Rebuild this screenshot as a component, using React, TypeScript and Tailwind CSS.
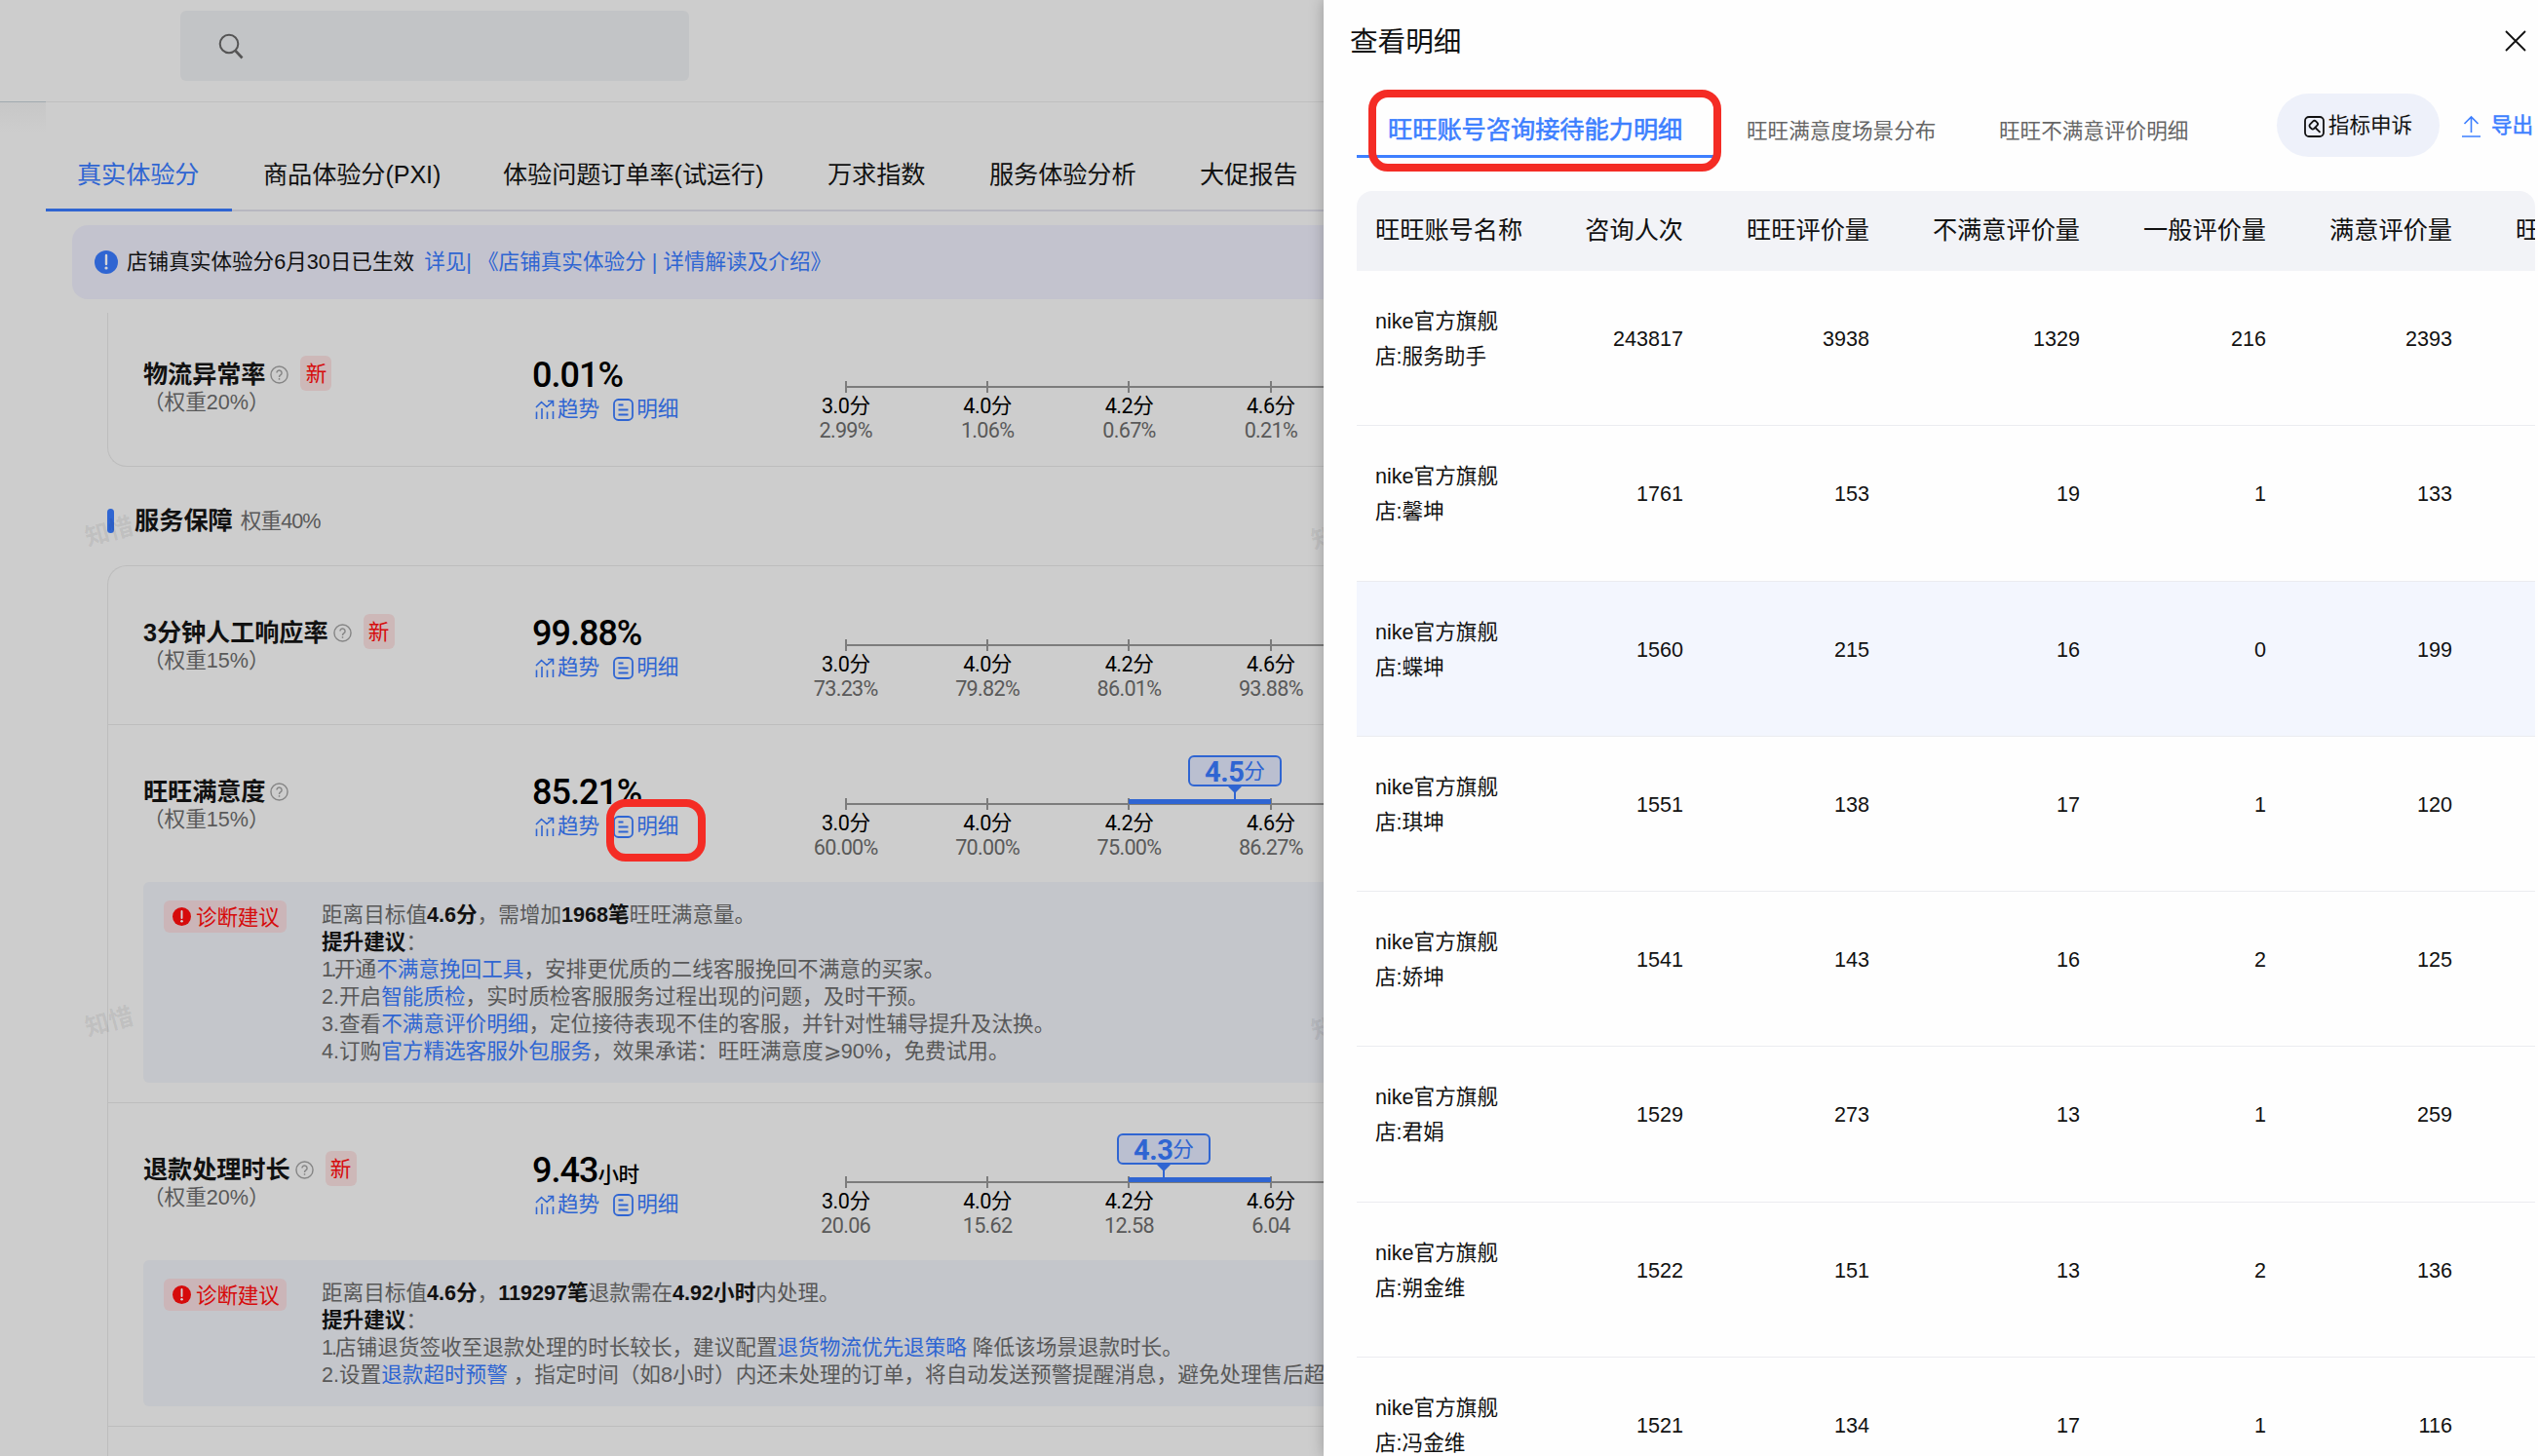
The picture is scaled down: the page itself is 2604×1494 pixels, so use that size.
import type { ReactNode } from "react";

const blue = "text-[#2f65d2]";

const mainTabs = [
  { label: "真实体验分", width: "w-[191px]" },
  { label: "商品体验分(PXI)", width: "w-[246px]" },
  { label: "体验问题订单率(试运行)", width: "w-[333px]" },
  { label: "万求指数", width: "w-[166px]" },
  { label: "服务体验分析", width: "w-[216px]" },
  { label: "大促报告", width: "w-[166px]" },
];

const accounts = [
  { name: "服务助手", values: [243817, 3938, 1329, 216, 2393] },
  { name: "馨坤", values: [1761, 153, 19, 1, 133] },
  { name: "蝶坤", values: [1560, 215, 16, 0, 199] },
  { name: "琪坤", values: [1551, 138, 17, 1, 120] },
  { name: "娇坤", values: [1541, 143, 16, 2, 125] },
  { name: "君娟", values: [1529, 273, 13, 1, 259] },
  { name: "朔金维", values: [1522, 151, 13, 2, 136] },
  { name: "冯金维", values: [1521, 134, 17, 1, 116] },
];

const columns = "grid grid-cols-[150px_166px_191px_216px_191px_191px_200px]";

export default function App() {
  return (
    <div className="relative h-[1494px] w-[2604px] overflow-hidden bg-[#cdcdcd] font-['Liberation_Sans','Noto_Sans_CJK_SC',sans-serif] text-[21.6px] text-[#111]">
      <Dashboard />
      <Drawer />

      {/* 标注框 */}
      <div className="absolute left-[622px] top-[820px] h-16 w-[102px] rounded-[20px] border-8 border-[#f42c25]" />
      <div className="absolute left-[1404px] top-[92px] h-[84px] w-[362px] rounded-[20px] border-8 border-[#f42c25]" />
    </div>
  );
}

function Dashboard() {
  return (
    <div className="relative flex h-full w-[1358px] flex-col overflow-hidden">
      {/* 顶部搜索 */}
      <header className="h-[104px] shrink-0 pl-[185px] pt-[11px]">
        <div className="flex h-[72px] w-[522px] items-center rounded-md bg-[#c2c4c6] pl-[39px]">
          <SearchIcon />
        </div>
      </header>

      <div className="flex min-h-0 flex-1">
        <div className="h-8 w-[47px] shrink-0 border-t border-[#a0a9af] bg-gradient-to-b from-[#c7c7c7] to-[#cdcdcd]" />
        <main className="w-[1500px] shrink-0 border-t border-[#bfbfbf]">
          <nav className="flex h-[112px] border-b-2 border-[#b7b7c0] text-[25.2px]">
            {mainTabs.map((tab, i) => (
              <div
                key={tab.label}
                className={`${tab.width} ${
                  i === 0 ? "border-b-[3px] border-[#2f65d2] text-[#2f65d2]" : ""
                } -mb-0.5 shrink-0 whitespace-nowrap pl-8 pt-[56px] leading-9 tracking-[-0.1px]`}
              >
                {tab.label}
              </div>
            ))}
          </nav>

          <div className="ml-[27px] mt-[14px] flex h-[76px] items-center rounded-2xl bg-[#c3c3ce] pl-[23px]">
            <AlertIcon className="size-6 text-[#2f65d2]" />
            <span className="ml-[9px]">店铺真实体验分6月30日已生效</span>
            <span className={`ml-2.5 ${blue}`}>详见|</span>
            <span className={`ml-[6px] ${blue}`}>《店铺真实体验分 | 详情解读及介绍》</span>
          </div>

          <section className="ml-[63px] mt-[14px] h-[158px] overflow-hidden rounded-bl-[20px] border-b border-l border-[#bdbdbd]">
            <div className="-mt-[5px]">
              <Metric
                title="物流异常率"
                weight="20%"
                isNew
                value="0.01%"
                scale={["2.99%", "1.06%", "0.67%", "0.21%"]}
              />
            </div>
          </section>

          <div className="relative ml-[63px] flex h-[101px] items-center pt-[9px]">
            <span className="h-[25px] w-[7px] rounded-full bg-[#2f65d2]" />
            <h2 className="ml-[21px] pt-0.5 text-[25.2px] font-bold">服务保障</h2>
            <span className="ml-2 pt-0.5 tracking-[-0.9px] text-[#595959]">权重40%</span>
          </div>

          <section className="ml-[63px] h-[960px] rounded-tl-[20px] border-l border-t border-[#bdbdbd]">
            <Metric
              title="3分钟人工响应率"
              weight="15%"
              isNew
              value="99.88%"
              scale={["73.23%", "79.82%", "86.01%", "93.88%"]}
            />
            <div className="mt-px border-t border-[#bdbdbd] pb-5">
              <Metric
                title="旺旺满意度"
                weight="15%"
                value="85.21%"
                scale={["60.00%", "70.00%", "75.00%", "86.27%"]}
                score="4.5"
                scorePosition="left-[424px]"
              />
              <Advice height="h-[206px]">
                <p>
                  距离目标值<B>4.6分</B>，需增加<B>1968笔</B>旺旺满意量。
                </p>
                <p>
                  <B>提升建议</B>：
                </p>
                <p>
                  <span className="tracking-[-2.5px]">1.</span>开通<A>不满意挽回工具</A>，安排更优质的二线客服挽回不满意的买家。
                </p>
                <p>
                  2.开启<A>智能质检</A>，实时质检客服服务过程出现的问题，及时干预。
                </p>
                <p>
                  3.查看<A>不满意评价明细</A>，定位接待表现不佳的客服，并针对性辅导提升及汰换。
                </p>
                <p>
                  4.订购<A>官方精选客服外包服务</A>，效果承诺：旺旺满意度⩾90%，免费试用。
                </p>
              </Advice>
            </div>
            <div className="border-y border-[#bdbdbd] pb-5">
              <Metric
                title="退款处理时长"
                weight="20%"
                isNew
                value="9.43"
                unit="小时"
                scale={["20.06", "15.62", "12.58", "6.04"]}
                score="4.3"
                scorePosition="left-[351px]"
              />
              <Advice height="h-[150px]">
                <p>
                  距离目标值<B>4.6分</B>，<B>119297笔</B>退款需在<B>4.92小时</B>内处理。
                </p>
                <p>
                  <B>提升建议</B>：
                </p>
                <p>
                  <span className="tracking-[-2px]">1.</span>店铺退货签收至退款处理的时长较长，建议配置<A>退货物流优先退策略</A> 降低该场景退款时长。
                </p>
                <p>
                  2.设置<A>退款超时预警</A> ，指定时间（如8小时）内还未处理的订单，将自动发送预警提醒消息，避免处理售后超时。
                </p>
              </Advice>
            </div>
          </section>
        </main>
      </div>

      {/* 水印 */}
      <Watermark place="left-[87px] top-[527px]" />
      <Watermark place="left-[87px] top-[1030px]" />
      <Watermark place="left-[1345px] top-[530px]" />
      <Watermark place="left-[1345px] top-[1033px]" />
    </div>
  );
}

interface MetricProps {
  title: string;
  weight: string;
  isNew?: boolean;
  value: string;
  unit?: string;
  scale: string[];
  score?: string;
  scorePosition?: string;
}

function Metric({ title, weight, isNew, value, unit, scale, score, scorePosition }: MetricProps) {
  const levels = ["3.0", "4.0", "4.2", "4.6"];
  return (
    <div className="flex h-[161px] pl-9">
      <div className="w-[399px] shrink-0 pt-[49px]">
        <div className="flex h-9 items-center">
          <h3 className="pt-[3px] text-[25.2px] font-bold tracking-[-0.1px]">{title}</h3>
          <HelpIcon />
          {isNew && (
            <span className="ml-3 flex h-9 w-8 items-center justify-center rounded-md bg-[#cdb8b8] pt-0.5 text-[#d60b0b]">
              新
            </span>
          )}
        </div>
        <p className="leading-6 text-[#595959]">（权重{weight}）</p>
      </div>

      <div className="w-[249px] shrink-0 pt-[51px]">
        <div className="flex h-[35px] items-baseline font-['Roboto','Noto_Sans_CJK_SC',sans-serif] text-[36px] font-medium leading-9 tracking-[-1px] text-black">
          {value}
          {unit && <span className="text-[21.6px] tracking-[-0.5px]">{unit}</span>}
        </div>
        <div className={`flex h-9 items-center pl-[3px] ${blue}`}>
          <TrendIcon />
          <span className="ml-[3px]">趋势</span>
          <DetailIcon />
          <span className="ml-[3px]">明细</span>
        </div>
      </div>

      <div className="relative flex shrink-0 pt-[75px] font-['Roboto','Noto_Sans_CJK_SC',sans-serif]">
        <div className="absolute left-[73px] right-[-300px] top-[80px] h-0.5 bg-[#7c7c7c]" />
        {score && <div className="absolute left-[363px] top-[76px] h-[5px] w-[146px] bg-[#2f65d2]" />}
        {levels.map((level, i) => (
          <div key={level} className="flex w-[145.4px] flex-col items-center">
            <span className="h-3 w-0.5 bg-[#7c7c7c]" />
            <span className="mt-px h-[25px] leading-[25px] tracking-[-0.5px] text-black">{level}分</span>
            <span className="mt-px leading-6 tracking-[-0.7px] text-[#595959]">{scale[i]}</span>
          </div>
        ))}
        {score && (
          <div className={`absolute top-[31px] flex w-24 flex-col items-center ${scorePosition}`}>
            <div className="flex h-8 w-full items-center justify-center rounded-md border-2 border-[#2f65d2] bg-[#babfd0] pt-px leading-7 text-[#2f65d2]">
              <b className="text-[29px] tracking-[-0.5px]">{score}</b>分
            </div>
            <svg className="h-[14px] w-[14px]" viewBox="0 0 14 14" fill="#2f65d2" aria-hidden="true">
              <path d="M0 0h14L8 6v8H6V6Z" />
            </svg>
          </div>
        )}
      </div>
    </div>
  );
}

function Advice({ height, children }: { height: string; children: ReactNode }) {
  return (
    <div className={`ml-9 flex rounded-md bg-[#c4c6cb] pt-[19px] ${height}`}>
      <div className="ml-[21px] flex h-[33px] w-[126px] shrink-0 items-center rounded-md bg-[#cbb5b8] pl-[9px] text-[#d60b0b]">
        <AlertIcon className="size-[19px]" />
        <span className="ml-[5px] whitespace-nowrap pt-[3px] tracking-[-0.2px]">诊断建议</span>
      </div>
      <div className="ml-9 mt-px whitespace-nowrap leading-[27.9px] text-[#585858]">{children}</div>
    </div>
  );
}

function B({ children }: { children: ReactNode }) {
  return <b className="text-[#111]">{children}</b>;
}

function A({ children }: { children: ReactNode }) {
  return <a className={blue}>{children}</a>;
}

function Watermark({ place }: { place: string }) {
  return (
    <span className={`absolute -rotate-[15deg] whitespace-nowrap text-[25px] font-bold text-black/[0.08] ${place}`}>知惜</span>
  );
}

function Drawer() {
  return (
    <aside className="absolute inset-y-0 left-[1358px] right-0 bg-[#fefefe] shadow-[0_0_14px_rgba(0,0,0,0.25)]">
      <div className="flex h-[84px] items-center justify-between pl-[27px] pr-3">
        <h1 className="pt-0.5 text-[28.6px]">查看明细</h1>
        <svg width={22} height={22} viewBox="0 0 22 22" stroke="#111" strokeWidth={1.8} aria-hidden="true">
          <path d="m1 1 20 20M21 1 1 21" />
        </svg>
      </div>

      <div className="ml-[34px] flex h-28 whitespace-nowrap text-[#666]">
        <div className="h-[78px] w-[368px] shrink-0 border-b-[3px] border-[#3d7fff] pl-[32px] pt-[31px] text-[25.2px] leading-9 text-[#3d7fff] [-webkit-text-stroke:0.6px_#3d7fff]">
          旺旺账号咨询接待能力明细
        </div>
        <div className="ml-8 w-[259px] shrink-0 pt-[33px] leading-9">旺旺满意度场景分布</div>
        <div className="w-[285px] shrink-0 pt-[33px] leading-9">旺旺不满意评价明细</div>
        <button className="mt-3 flex h-[65px] w-[167px] items-center justify-center gap-1 rounded-full bg-[#eef1fa] pt-0.5 text-[#111]">
          <AppealIcon />
          指标申诉
        </button>
        <div className="ml-[22px] mt-3 flex h-[65px] items-center pt-0.5 text-[#3d7fff]">
          <svg width={21} height={24} viewBox="0 0 21 24" fill="none" stroke="currentColor" strokeWidth={1.6} aria-hidden="true">
            <path d="M10.5 18V2M3.5 9l7-7 7 7M1 22h19" />
          </svg>
          <span className="ml-[10px] [-webkit-text-stroke:0.5px_#3d7fff]">导出</span>
        </div>
      </div>

      <div className="ml-[34px] w-[1209px] overflow-hidden rounded-t-2xl">
        <div className={`${columns} h-[82px] whitespace-nowrap bg-[#f2f3f7] pl-[19px] text-right text-[25.2px] leading-[80px]`}>
          <span className="text-left">旺旺账号名称</span>
          <span>咨询人次</span>
          <span>旺旺评价量</span>
          <span>不满意评价量</span>
          <span>一般评价量</span>
          <span>满意评价量</span>
          <span className="pl-[65px] text-left">旺旺满意度</span>
        </div>
        {accounts.map((account, i) => (
          <div
            key={account.name}
            className={`${columns} h-[159.25px] border-b border-[#ebecf0] pl-[19px] ${
              i === 2 ? "bg-[#f3f6fe]" : ""
            }`}
          >
            <div className="whitespace-nowrap pt-[34px] leading-9">
              <p>nike官方旗舰</p>
              <p>店:{account.name}</p>
            </div>
            {account.values.map((value, j) => (
              <div key={j} className="pt-[52px] text-right leading-9">
                {value}
              </div>
            ))}
          </div>
        ))}
      </div>
    </aside>
  );
}

function SearchIcon() {
  return (
    <svg width={27} height={27} viewBox="0 0 27 27" fill="none" stroke="#555" strokeWidth={2} aria-hidden="true">
      <circle cx={11} cy={11} r={9.3} />
      <path d="m17.5 18 7 7.5" strokeWidth={2.6} />
    </svg>
  );
}

function AlertIcon({ className }: { className: string }) {
  return (
    <svg className={`shrink-0 ${className}`} viewBox="0 0 24 24" aria-hidden="true">
      <circle cx={12} cy={12} r={12} fill="currentColor" />
      <path d="M12 5v9" stroke="#d5d5d8" strokeWidth={2.4} strokeLinecap="round" />
      <circle cx={12} cy={18} r={1.6} fill="#d5d5d8" />
    </svg>
  );
}

function HelpIcon() {
  return (
    <svg
      className="ml-[5px] mt-0.5 shrink-0"
      width={19}
      height={19}
      viewBox="0 0 20 20"
      fill="none"
      stroke="#858585"
      strokeWidth={1.5}
      aria-hidden="true"
    >
      <circle cx={10} cy={10} r={9} />
      <path d="M7.3 8a2.7 2.7 0 1 1 4.2 2.2c-1 .7-1.5 1.1-1.5 2.3" />
      <path d="M10 13.8v1.7" />
    </svg>
  );
}

function TrendIcon() {
  return (
    <svg width={20} height={20} viewBox="0 0 20 20" fill="none" stroke="currentColor" strokeWidth={1.6} aria-hidden="true">
      <path d="m1 8 5.500-5.500 5.500 5L18 2M13 1.500h5.500V7" />
      <path d="M1.500 12.500V20M7 9v11M12.500 12.500V20M18.500 12v8" />
    </svg>
  );
}

function DetailIcon() {
  return (
    <svg
      className="ml-[14px]"
      width={21}
      height={23}
      viewBox="0 0 21 23"
      fill="none"
      stroke="currentColor"
      strokeWidth={1.8}
      aria-hidden="true"
    >
      <rect x={1} y={1} width={19} height={21} rx={4.5} />
      <path d="M5.500 6.500h5M5.500 11.500h10M5.500 16.500h10" />
    </svg>
  );
}

// 圆角方框内的小法槌
function AppealIcon() {
  return (
    <svg width={21} height={22} viewBox="0 0 21 22" fill="none" stroke="currentColor" strokeWidth={1.8} aria-hidden="true">
      <rect x={1} y={1} width={19} height={20} rx={4} />
      <rect x={5.5} y={6.2} width={8.5} height={6} rx={2} transform="rotate(-45 9.750 9.200)" />
      <path d="m11.500 12 5 4.800" />
    </svg>
  );
}
